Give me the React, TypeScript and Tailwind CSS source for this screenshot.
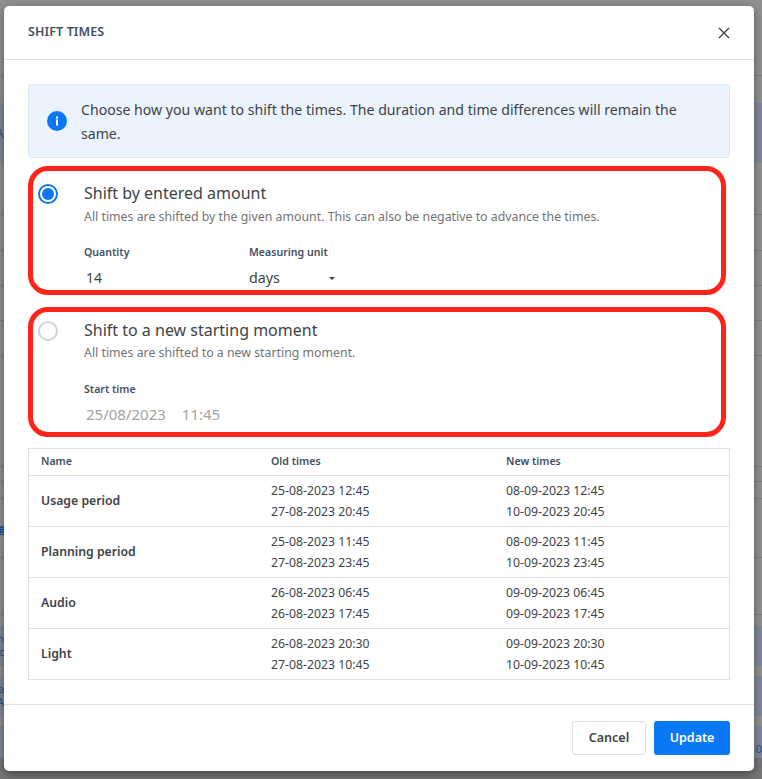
import React from "react";

const rows = [
  ["Usage period", "25-08-2023 12:45", "27-08-2023 20:45", "08-09-2023 12:45", "10-09-2023 20:45"],
  ["Planning period", "25-08-2023 11:45", "27-08-2023 23:45", "08-09-2023 11:45", "10-09-2023 23:45"],
  ["Audio", "26-08-2023 06:45", "26-08-2023 17:45", "09-09-2023 06:45", "09-09-2023 17:45"],
  ["Light", "26-08-2023 20:30", "27-08-2023 10:45", "09-09-2023 20:30", "10-09-2023 10:45"],
];

function Band({ h, blue, line, children }: { h: string; blue?: boolean; line?: boolean; children?: React.ReactNode }) {
  return (
    <div className={h + " flex items-center justify-between overflow-hidden text-[10px] leading-[13px] text-[#2f4a8a] " + (blue ? "bg-[#7d8796] " : "") + (line ? "border-b border-[#7c7c7c]" : "")}>
      {children}
    </div>
  );
}

export default function App() {
  return (
    <div className="relative h-[779px] w-[762px] overflow-hidden bg-[#8f8f8f] font-['Noto_Sans',sans-serif] text-[#404346]">
      <div className="flex flex-col">
        <Band h="h-[76px]" line />
        <div className="h-[27px]" />
        <Band h="h-[60px]" blue><span className="-ml-1 text-[12px]">A</span></Band>
        <Band h="h-[52px]" line />
        <Band h="h-[36px]" line />
        <Band h="h-[35px]" line />
        <Band h="h-[35px]" line />
        <Band h="h-[35px]" line />
        <Band h="h-[111px]" line />
        <Band h="h-[15px]" line />
        <Band h="h-[17px]" line />
        <Band h="h-[59px]" line><span className="-ml-[7px] text-[12px] font-bold text-[#10479c] underline">re</span></Band>
        <Band h="h-[57px]" line />
        <div className="h-[11px]" />
        <Band h="h-[40px]" blue><span className="-ml-[6px] w-[10px] text-right">n<br />c</span></Band>
        <div className="h-[10px]" />
        <Band h="h-[40px]" blue><span className="-ml-[6px] w-[10px] text-right">a<br />A</span></Band>
        <div className="h-[10px]" />
        <Band h="h-[32px]" blue><span /><span className="-mr-[3px] pt-3 text-[11px]">0:</span></Band>
        <div className="h-[22px] bg-[#757575]" />
      </div>

      <div className="absolute left-1 top-[6px] flex h-[765px] w-[750px] flex-col rounded-[5px] bg-white shadow-[0_3px_9px_rgba(0,0,0,0.4)]">
        <div className="flex h-[54px] items-center justify-between border-b border-[#dfe1e4] pl-6 pr-[22px]">
          <span className="text-[12.5px] font-semibold tracking-[0.1px] text-[#44505f]">SHIFT TIMES</span>
          <svg width="16" height="16" viewBox="0 0 16 16" fill="none" stroke="#3f4347" strokeWidth="1.4"><path d="M3 3l10 10M13 3L3 13" /></svg>
        </div>
        <div className="flex flex-1 flex-col px-6 pt-6">
          <div className="flex h-[74px] items-center rounded-[3px] border border-[#dbe8f8] bg-[#ebf3fe] pl-[18px] pr-4">
            <svg width="20" height="20" viewBox="0 0 20 20" className="shrink-0"><circle cx="10" cy="10" r="10" fill="#0a78f5" /><rect x="9" y="8.5" width="2" height="6" fill="#fff" /><rect x="9" y="5.5" width="2" height="2" fill="#fff" /></svg>
            <p className="ml-[14px] pt-[1px] text-[14.12px] leading-[24px]">Choose how you want to shift the times. The duration and time differences will remain the same.</p>
          </div>
          <div className="mt-2 flex h-[129px] w-[698px] rounded-[20px] border-[5px] border-[#ff2419] pl-[5px]">
            <span className="mt-[13px] flex h-5 w-5 items-center justify-center rounded-full border-2 border-[#0a78f5]"><span className="h-3 w-3 rounded-full bg-[#0a78f5]" /></span>
            <div className="ml-[26px] flex-1 pt-[10px]">
              <div className="text-[16px] leading-[24px]">Shift by entered amount</div>
              <div className="mt-[3px] text-[12.33px] leading-[18px] text-[#737373]">All times are shifted by the given amount. This can also be negative to advance the times.</div>
              <div className="mt-[18px] flex">
                <div className="w-[165px]">
                  <div className="text-[10.6px] font-semibold leading-[16px] text-[#44505f]">Quantity</div>
                  <div className="mt-[8px] pl-[2px] text-[14px] leading-[20px]">14</div>
                </div>
                <div>
                  <div className="text-[10.6px] font-semibold leading-[16px] text-[#44505f]">Measuring unit</div>
                  <div className="mt-[8px] flex items-center text-[14.3px] leading-[20px]">days<span className="ml-[49px] h-0 w-0 border-x-[3px] border-t-[3px] border-x-transparent border-t-[#3f4347]" /></div>
                </div>
              </div>
            </div>
          </div>
          <div className="mt-[12px] flex h-[130px] w-[698px] rounded-[20px] border-[5px] border-[#ff2419] pl-[5px]">
            <span className="mt-[9px] h-5 w-5 rounded-full border-2 border-[#ced3d9]" />
            <div className="ml-[26px] flex-1 pt-[6px]">
              <div className="text-[16px] leading-[24px]">Shift to a new starting moment</div>
              <div className="mt-[2px] text-[12.33px] leading-[18px] text-[#737373]">All times are shifted to a new starting moment.</div>
              <div className="mt-[19px] text-[10.6px] font-semibold leading-[16px] text-[#44505f]">Start time</div>
              <div className="mt-[7px] flex pl-[2px] text-[15px] leading-[20px] text-[#a3a3a3]"><span>25/08/2023</span><span className="ml-4">11:45</span></div>
            </div>
          </div>
          <div className="mt-[11px] border border-[#dfe1e4] text-[12.25px]">
            <div className="flex h-[27px] items-center border-b border-[#dfe1e4] pl-3 text-[10.6px] font-semibold text-[#44505f]">
              <span className="w-[230px]">Name</span><span className="w-[235px]">Old times</span><span>New times</span>
            </div>
            {rows.map((r, i) => (
              <div key={r[0]} className={"flex items-center pl-3 " + (i < 3 ? "h-[51px] border-b border-[#dfe1e4]" : "h-[50px]")}>
                <span className="w-[230px] font-semibold">{r[0]}</span>
                <div className="w-[235px] leading-[21px]"><div>{r[1]}</div><div>{r[2]}</div></div>
                <div className="leading-[21px]"><div>{r[3]}</div><div>{r[4]}</div></div>
              </div>
            ))}
          </div>
        </div>
        <div className="flex h-[67px] items-center justify-end gap-2 border-t border-[#dfe1e4] pr-6">
          <button className="h-[34px] w-[74px] rounded-[3px] border border-[#dfe1e4] bg-white text-[12.5px] font-semibold">Cancel</button>
          <button className="h-[34px] w-[76px] rounded-[3px] bg-[#0a78f5] text-[12.5px] font-semibold text-white">Update</button>
        </div>
      </div>
    </div>
  );
}
